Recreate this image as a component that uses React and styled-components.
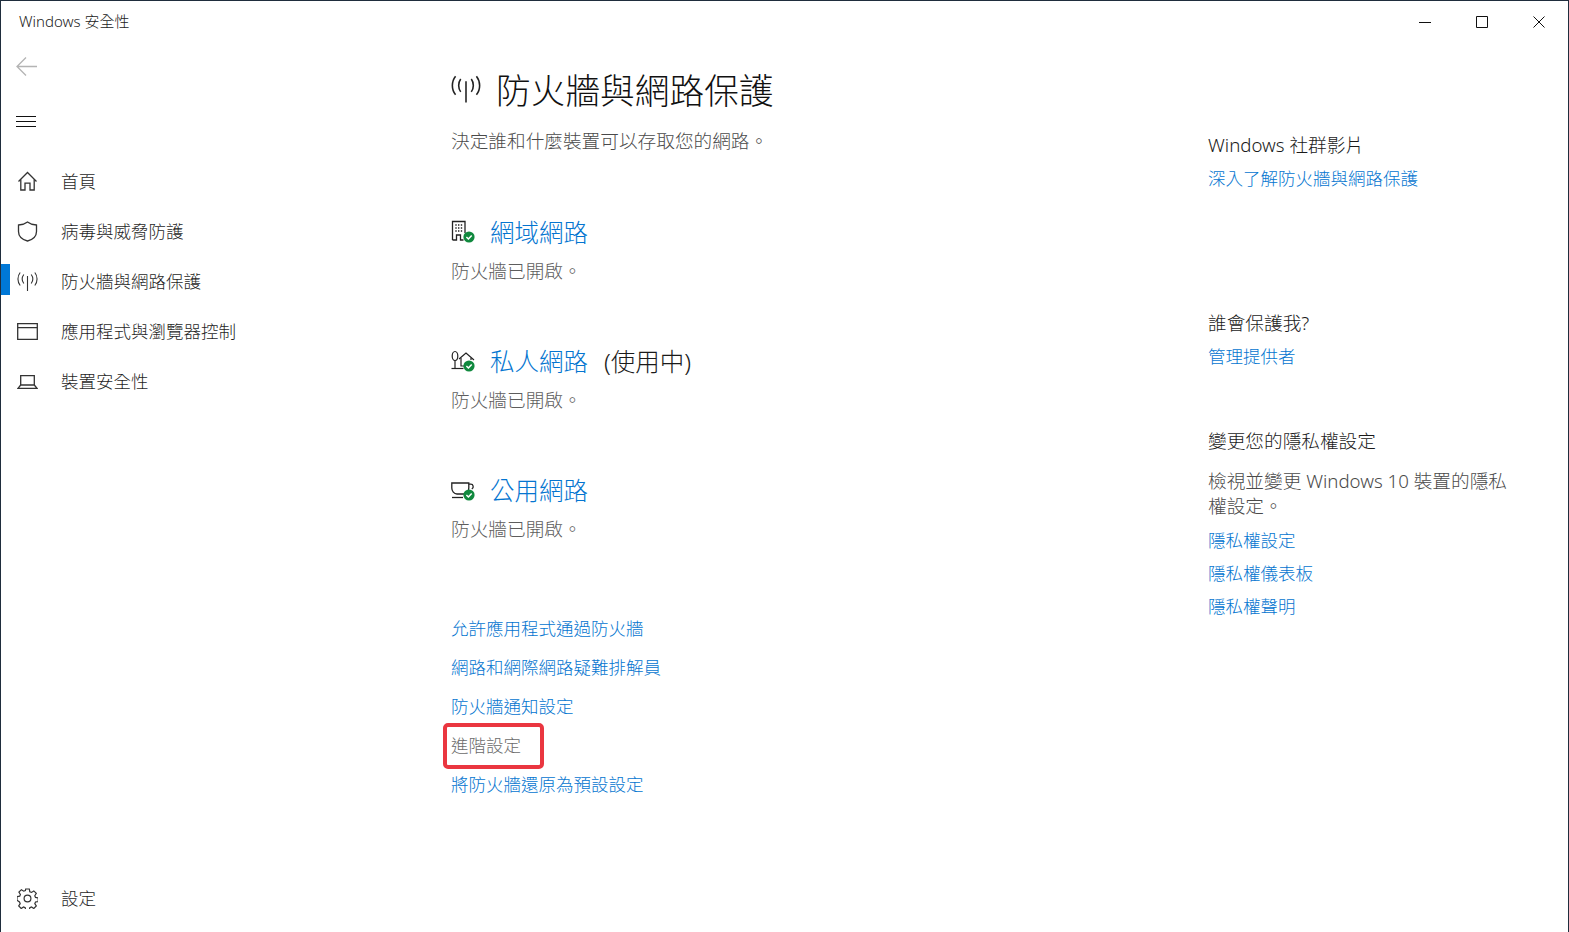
import styled, { createGlobalStyle } from "styled-components";

const GlobalStyle = createGlobalStyle`
  html, body {
    margin: 0;
    padding: 0;
    background: #fff;
  }
  * {
    box-sizing: border-box;
  }
`;

const FONT = `"Noto Sans", "Noto Sans CJK TC", sans-serif`;
const BLUE = "#0475d0";

const Window = styled.div`
  width: 1569px;
  height: 932px;
  display: flex;
  flex-direction: column;
  background: #fff;
  border-top: 1px solid #1f2d3d;
  border-left: 1px solid #1f2d3d;
  border-right: 1px solid #1f2d3d;
  font-family: ${FONT};
  font-weight: 300;
  color: #1a1a1a;
  overflow: hidden;
`;

const TitleBar = styled.div`
  height: 40px;
  flex: none;
  display: flex;
  align-items: center;
  justify-content: space-between;
  padding: 0 1px 0 18px;
  font-size: 15px;
  color: #222;
`;

const AppName = styled.span`
  margin-top: -2px;
`;

const Caption = styled.div`
  display: flex;
`;

const CaptionButton = styled.div`
  width: 57px;
  height: 40px;
  display: flex;
  align-items: center;
  justify-content: center;
  svg {
    display: block;
    margin-top: 1px;
  }
`;

const Body = styled.div`
  flex: 1;
  display: flex;
  min-height: 0;
`;

const Sidebar = styled.nav`
  width: 450px;
  flex: none;
  display: flex;
  flex-direction: column;
  padding-bottom: 10px;
`;

const ToolButton = styled.div`
  height: ${(p) => p.$h}px;
  padding-left: 15px;
  display: flex;
  align-items: center;
  flex: none;
`;

const NavList = styled.div`
  padding-top: 4px;
`;

const NavItem = styled.div`
  position: relative;
  height: 50px;
  flex: none;
  display: flex;
  align-items: center;
  padding-left: 16px;
  font-size: 17.5px;
  color: #1f1f1f;
  margin-top: ${(p) => (p.$bottom ? "auto" : "0")};

  ${(p) =>
    p.$active &&
    `
    &::before {
      content: "";
      position: absolute;
      left: 0;
      top: 9px;
      width: 9px;
      height: 31px;
      background: #0078d7;
    }
  `}
`;

const NavIcon = styled.span`
  width: 21px;
  height: 21px;
  margin-right: 23px;
  margin-top: 2px;
  flex: none;
  svg {
    display: block;
  }
`;

const Main = styled.main`
  width: 757px;
  flex: none;
  display: flex;
  flex-direction: column;
`;

const PageTitle = styled.h1`
  margin: 0;
  height: 60px;
  margin-top: 18px;
  margin-bottom: 2px;
  display: flex;
  align-items: center;
  font-size: 34.7px;
  font-weight: 300;
  color: #111;
  svg {
    margin-right: 15px;
    display: block;
    flex: none;
  }
`;

const Subtitle = styled.p`
  margin: 0;
  height: 40px;
  line-height: 40px;
  font-size: 18.67px;
  color: #4a4a4a;
`;

const Networks = styled.div`
  margin-top: 50px;
  display: flex;
  flex-direction: column;
  gap: 50px;
`;

const Network = styled.section`
  height: 79px;
`;

const NetworkHead = styled.div`
  height: 40px;
  display: flex;
  align-items: center;
  font-size: 24.5px;
  color: #1a1a1a;
  svg {
    display: block;
    flex: none;
    margin-right: 15px;
  }
`;

const NetworkName = styled.span`
  color: ${BLUE};
`;

const ActiveTag = styled.span`
  margin-left: 16px;
`;

const Status = styled.p`
  margin: 0;
  height: 39px;
  line-height: 39px;
  font-size: 18.67px;
  color: #5d5d5d;
`;

const Links = styled.div`
  margin-top: 61px;
  display: flex;
  flex-direction: column;
`;

const ActionLink = styled.a`
  position: relative;
  display: block;
  height: 39px;
  line-height: 39px;
  font-size: 17.5px;
  color: ${(p) => (p.$muted ? "#6b6b6b" : BLUE)};
`;

const Highlight = styled.span`
  position: absolute;
  left: -8px;
  top: -3px;
  width: 101px;
  height: 46px;
  border: 4px solid #ea3640;
  border-radius: 5px;
`;

const Aside = styled.aside`
  flex: 1;
  display: flex;
  flex-direction: column;
  padding-top: 87px;
`;

const AsideGroup = styled.div`
  height: ${(p) => p.$h}px;
  flex: none;
`;

const AsideTitle = styled.h2`
  margin: 0;
  height: 34px;
  line-height: 34px;
  font-size: 18.67px;
  font-weight: 300;
  color: #1a1a1a;
`;

const AsideLink = styled.a`
  display: block;
  height: 33px;
  line-height: 33px;
  font-size: 17.5px;
  color: ${BLUE};
`;

const AsideText = styled.p`
  margin: 10px 0 6px;
  width: 310px;
  font-size: 18.67px;
  line-height: 25px;
  color: #4a4a4a;
`;

const WifiIcon = ({ size, color = "#222", sw = 1.1 }) => (
  <svg width={size} height={size} viewBox="0 0 21 21" fill="none" stroke={color} strokeWidth={sw}>
    <path d="M10.5 5v15" />
    <path d="M6.8 3.5c-1.9 2.6-1.9 6.4 0 9" />
    <path d="M14.2 3.5c1.9 2.6 1.9 6.4 0 9" />
    <path d="M3.2 1.5c-3 3.7-3 9.5 0 13" />
    <path d="M17.8 1.5c3 3.7 3 9.5 0 13" />
  </svg>
);

const Check = () => (
  <>
    <circle cx="18" cy="18" r="5.6" fill="#10893e" stroke="none" />
    <path d="M15.4 18l2 2 3.3-3.6" fill="none" stroke="#fff" strokeWidth="1.5" />
  </>
);

const DomainIcon = () => (
  <svg width="24" height="24" viewBox="0 0 24 24" fill="none" stroke="#222" strokeWidth="1.3">
    <path d="M1.5 21V2.5h12.5V14" />
    <path d="M1.5 21h4v-5h4v5h3" />
    <path d="M4.3 6h1.4M7 6h1.4M9.8 6h1.4M4.3 9h1.4M7 9h1.4M9.8 9h1.4M4.3 12h1.4M7 12h1.4M9.8 12h1.4" strokeWidth="1.6" />
    <Check />
  </svg>
);

const HomeNetIcon = () => (
  <svg width="24" height="24" viewBox="0 0 24 24" fill="none" stroke="#222" strokeWidth="1.2">
    <path d="M0.5 20.5h12" />
    <ellipse cx="4" cy="8" rx="2.8" ry="4.5" />
    <path d="M4 12.5v8" />
    <path d="M8 11l7-6 8 7" />
    <path d="M10 10v8h3M20 10v2" />
    <Check />
  </svg>
);

const CupIcon = () => (
  <svg width="24" height="24" viewBox="0 0 24 24" fill="none" stroke="#222" strokeWidth="1.3">
    <path d="M0.8 6h17v5c0 3-2 6-5 6H6c-3 0-5.2-3-5.2-6z" />
    <path d="M17.8 7.2h2c2.5 0 3.4 3.3 1 4.8" />
    <path d="M1 20.5h11" />
    <Check />
  </svg>
);

const HomeIcon = () => (
  <svg width="21" height="21" viewBox="0 0 21 21" fill="none" stroke="#333" strokeWidth="1.3">
    <path d="M1.5 10.5L10.5 1.5l9 9" />
    <path d="M3.8 8.500V19h4.200v-6.800h5V19h4.200V8.500" />
  </svg>
);

const ShieldIcon = () => (
  <svg width="21" height="21" viewBox="0 0 21 21" fill="none" stroke="#333" strokeWidth="1.3">
    <path d="M10.5 1c2.5 2 5.5 2.800 9 3v6.500c0 4.500-3.500 8-9 9.500-5.500-1.500-9-5-9-9.500V4c3.500-.2 6.500-1 9-3z" />
  </svg>
);

const BrowserIcon = () => (
  <svg width="21" height="21" viewBox="0 0 21 21" fill="none" stroke="#333" strokeWidth="1.3">
    <path d="M.7 2.700h19.600v15.600H.7zM.7 6.700h19.600" />
  </svg>
);

const LaptopIcon = () => (
  <svg width="21" height="21" viewBox="0 0 21 21" fill="none" stroke="#333" strokeWidth="1.3">
    <path d="M3.7 14V4.700h13.600V14" />
    <path d="M1 17.300l2.700-3.300h13.600l2.700 3.300z" />
  </svg>
);

const GearIcon = () => (
  <svg width="21" height="21" viewBox="0 0 21 21" fill="none" stroke="#333" strokeWidth="1.2">
    <circle cx="10.5" cy="10.5" r="3.400" />
    <path d="M8.700 1h3.600l.5 2.700 1.700.7 2.300-1.500 2.500 2.500-1.500 2.300.7 1.700 2.700.5v3.600l-2.700.5-.7 1.700 1.500 2.300-2.500 2.500-2.300-1.500-1.700.7-.5 2.700H8.700l-.5-2.700-1.700-.7-2.300 1.500-2.500-2.500 1.500-2.300-.7-1.700L0 12.300V8.700l2.700-.5.7-1.700-1.500-2.300 2.500-2.500 2.300 1.500 1.700-.7z" />
  </svg>
);

const navItems = [
  { label: "首頁", icon: <HomeIcon /> },
  { label: "病毒與威脅防護", icon: <ShieldIcon /> },
  { label: "防火牆與網路保護", icon: <WifiIcon size={21} color="#333" />, active: true },
  { label: "應用程式與瀏覽器控制", icon: <BrowserIcon /> },
  { label: "裝置安全性", icon: <LaptopIcon /> },
];

const networks = [
  { name: "網域網路", icon: <DomainIcon /> },
  { name: "私人網路", icon: <HomeNetIcon />, active: true },
  { name: "公用網路", icon: <CupIcon /> },
];

const App = () => {
  return (
    <Window>
      <GlobalStyle />
      <TitleBar>
        <AppName>Windows 安全性</AppName>
        <Caption>
          <CaptionButton>
            <svg width="12" height="12" viewBox="0 0 12 12" stroke="#111" fill="none">
              <path d="M0 6.500h12" />
            </svg>
          </CaptionButton>
          <CaptionButton>
            <svg width="12" height="12" viewBox="0 0 12 12" stroke="#111" fill="none">
              <path d="M.5.500h11v11H.5z" />
            </svg>
          </CaptionButton>
          <CaptionButton>
            <svg width="12" height="12" viewBox="0 0 12 12" stroke="#111" fill="none">
              <path d="M.5.500l11 11M11.500.500l-11 11" />
            </svg>
          </CaptionButton>
        </Caption>
      </TitleBar>
      <Body>
        <Sidebar>
          <ToolButton $h={50}>
            <svg width="21" height="21" viewBox="0 0 21 21" fill="none" stroke="#b4b4b4" strokeWidth="1.3">
              <path d="M10 1.500l-9 9 9 9M1 10.500h20" />
            </svg>
          </ToolButton>
          <ToolButton $h={60}>
            <svg width="21" height="14" viewBox="0 0 21 14" fill="none" stroke="#111" strokeWidth="1">
              <path d="M0 2.500h20M0 7.500h20M0 12.500h20" />
            </svg>
          </ToolButton>
          <NavList>
            {navItems.map((item) => (
              <NavItem key={item.label} $active={item.active}>
                <NavIcon>{item.icon}</NavIcon>
                {item.label}
              </NavItem>
            ))}
          </NavList>
          <NavItem $bottom>
            <NavIcon>
              <GearIcon />
            </NavIcon>
            設定
          </NavItem>
        </Sidebar>
        <Main>
          <PageTitle>
            <WifiIcon size={30} sw={1.1} />
            防火牆與網路保護
          </PageTitle>
          <Subtitle>決定誰和什麼裝置可以存取您的網路。</Subtitle>
          <Networks>
            {networks.map((n) => (
              <Network key={n.name}>
                <NetworkHead>
                  {n.icon}
                  <NetworkName>{n.name}</NetworkName>
                  {n.active && <ActiveTag>(使用中)</ActiveTag>}
                </NetworkHead>
                <Status>防火牆已開啟。</Status>
              </Network>
            ))}
          </Networks>
          <Links>
            <ActionLink>允許應用程式通過防火牆</ActionLink>
            <ActionLink>網路和網際網路疑難排解員</ActionLink>
            <ActionLink>防火牆通知設定</ActionLink>
            <ActionLink $muted>
              進階設定
              <Highlight />
            </ActionLink>
            <ActionLink>將防火牆還原為預設設定</ActionLink>
          </Links>
        </Main>
        <Aside>
          <AsideGroup $h={178}>
            <AsideTitle>Windows 社群影片</AsideTitle>
            <AsideLink>深入了解防火牆與網路保護</AsideLink>
          </AsideGroup>
          <AsideGroup $h={118}>
            <AsideTitle>誰會保護我?</AsideTitle>
            <AsideLink>管理提供者</AsideLink>
          </AsideGroup>
          <AsideGroup $h={200}>
            <AsideTitle>變更您的隱私權設定</AsideTitle>
            <AsideText>檢視並變更 Windows 10 裝置的隱私權設定。</AsideText>
            <AsideLink>隱私權設定</AsideLink>
            <AsideLink>隱私權儀表板</AsideLink>
            <AsideLink>隱私權聲明</AsideLink>
          </AsideGroup>
        </Aside>
      </Body>
    </Window>
  );
};

export default App;
